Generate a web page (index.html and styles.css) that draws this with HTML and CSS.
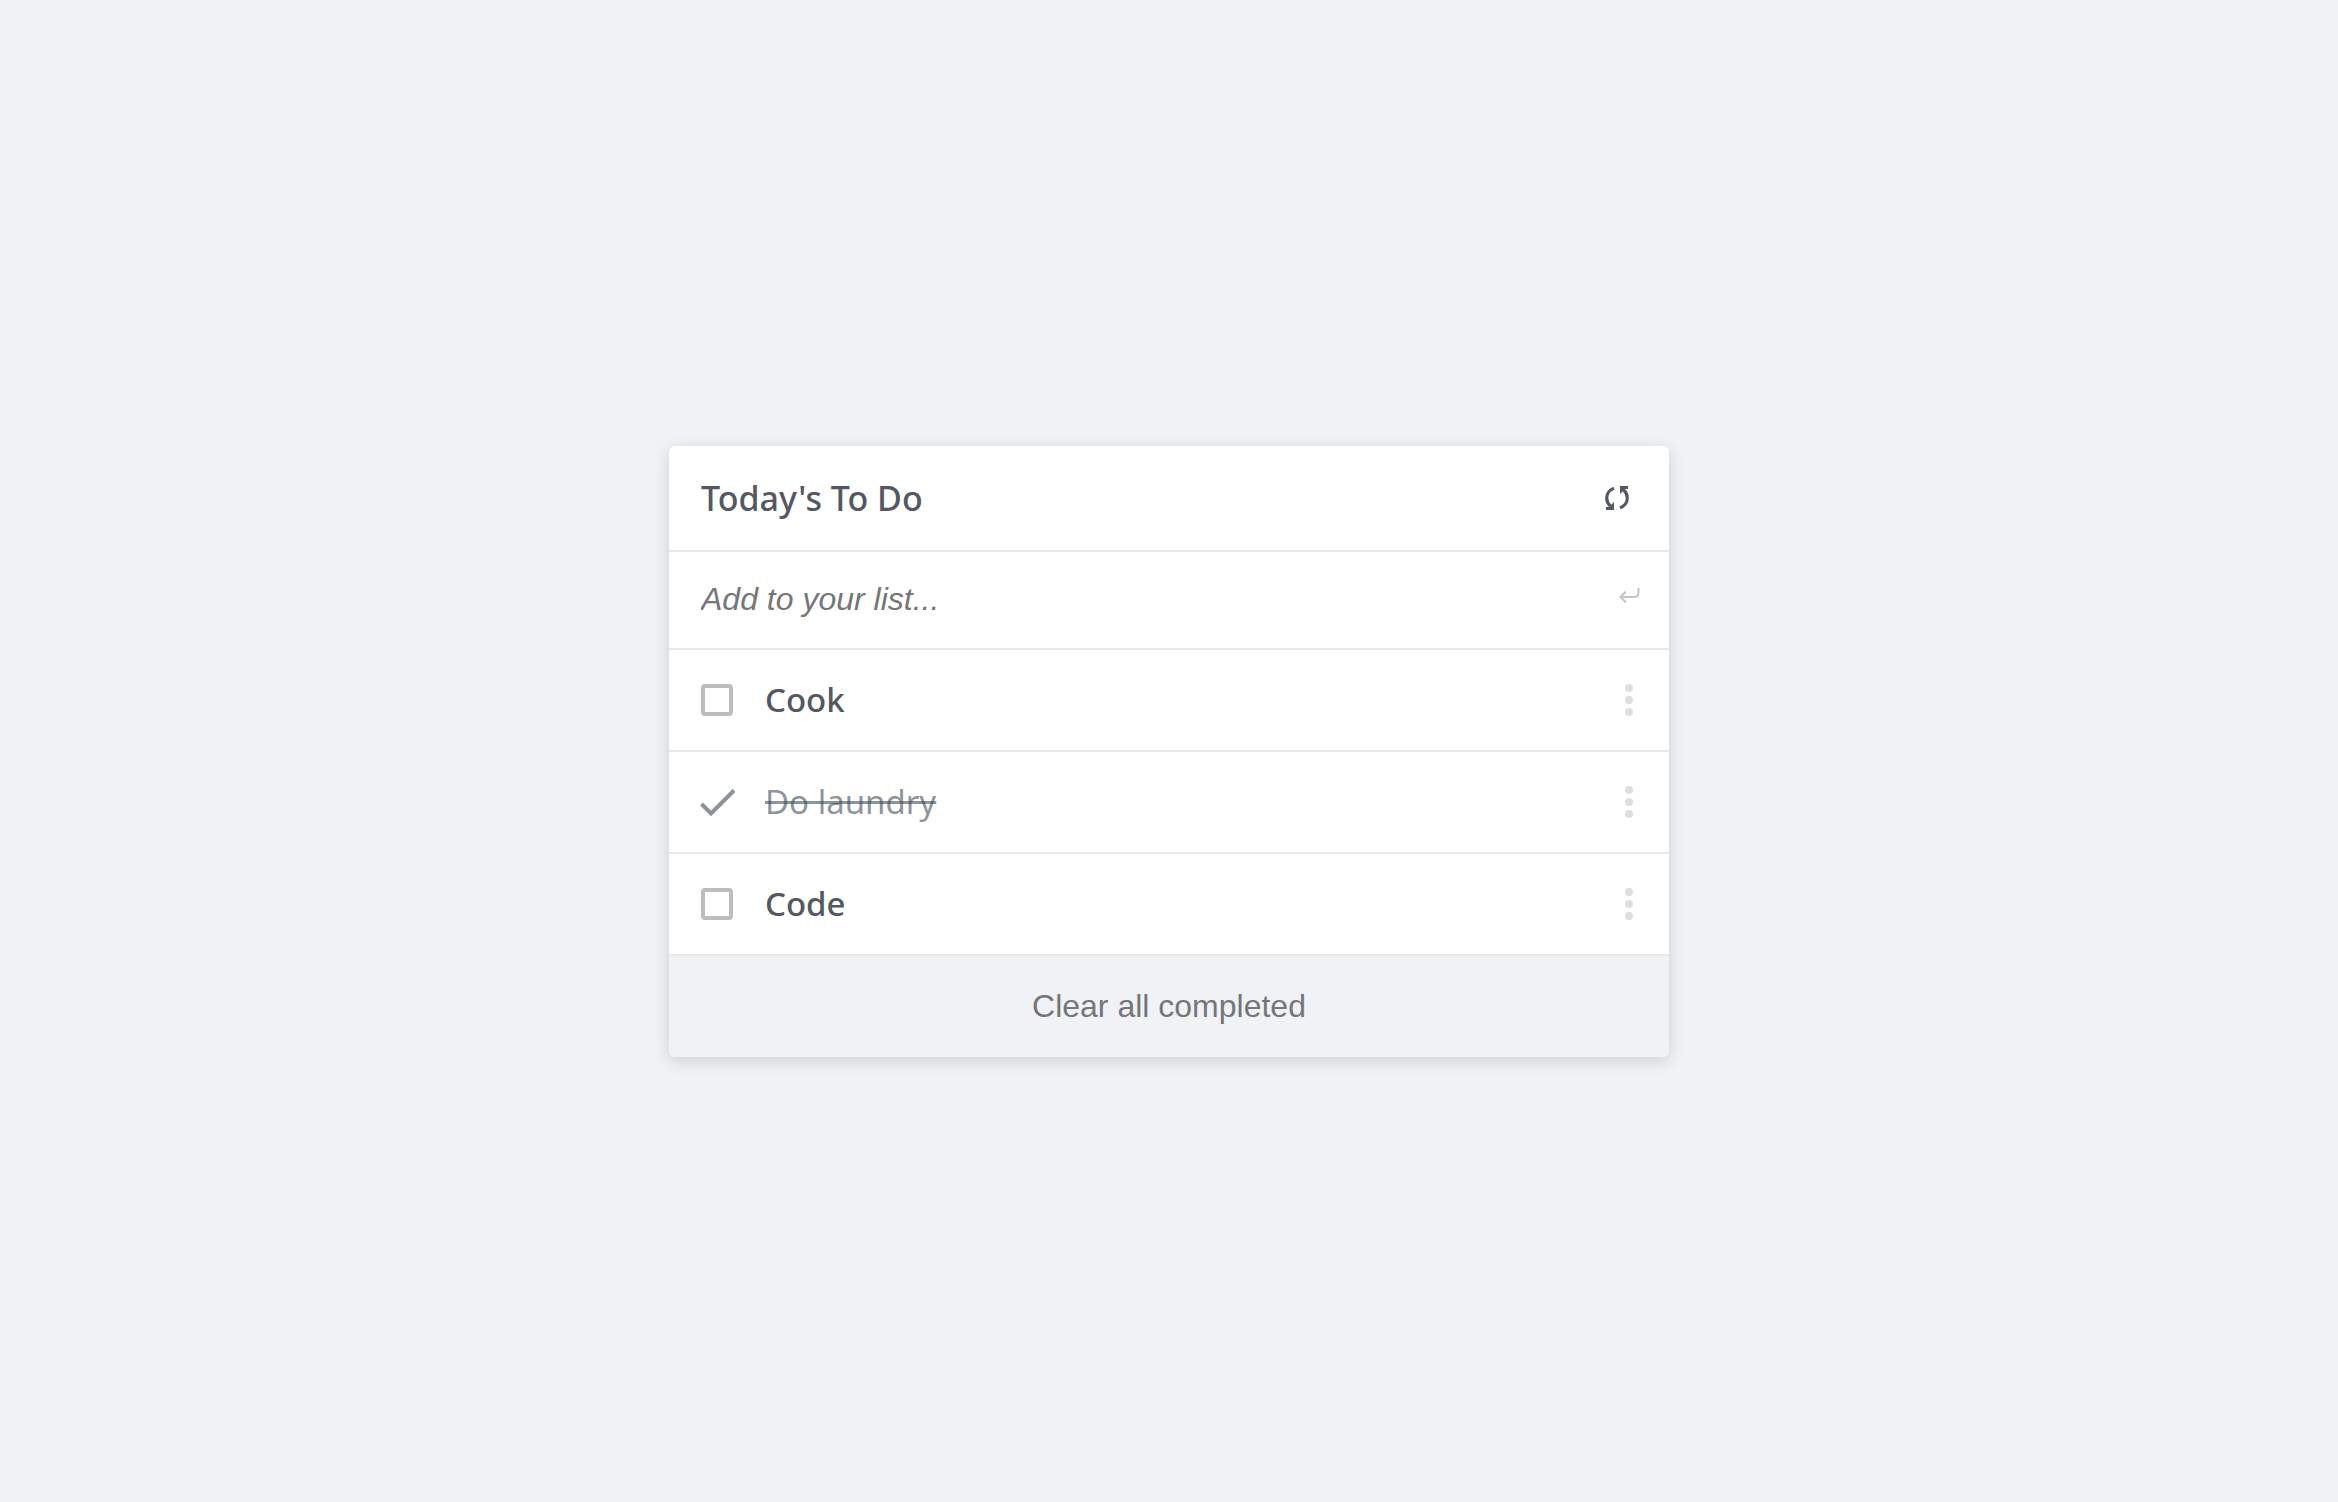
FILE: index.html
```html
<!DOCTYPE html>
<html lang="en">
<head>
  <meta charset="utf-8">
  <meta name="viewport" content="width=device-width, initial-scale=1">
  <title>To Do</title>
  <link rel="stylesheet" href="styles.css">
</head>
<body>
  <main class="card">
    <header class="card-header">
      <h1 class="title">Today's To Do</h1>
      <button class="icon-button refresh" type="button" aria-label="Refresh">
        <svg width="24" height="24" viewBox="0 0 24 24" aria-hidden="true">
          <path d="M9 2.2C4.800 3.600 1.700 7.400 1.700 12C1.700 15.200 3.100 18 5.300 20M15 21.800C19.200 20.400 22.300 16.600 22.300 12C22.300 8.800 20.900 6 18.700 4" fill="none" stroke="currentColor" stroke-width="3.200"/>
          <path d="M9 16v8H1v-3h3l2-2zM15 8V0h8v3h-3l-2 2z" fill="currentColor"/>
        </svg>
      </button>
    </header>

    <form class="add-row">
      <input class="add-input" type="text" placeholder="Add to your list..." aria-label="Add to your list">
      <button class="icon-button enter" type="submit" aria-label="Add">
        <svg width="22" height="18" viewBox="0 0 22 18" aria-hidden="true">
          <path d="M19.500 1v4.500Q19.500 10 15 10H1.500M7 4.500L1.500 10L7 15.500" fill="none" stroke="currentColor" stroke-width="2"/>
        </svg>
      </button>
    </form>

    <ul class="list">
      <li class="item">
        <label class="item-label">
          <input class="check" type="checkbox">
          <span class="item-text">Cook</span>
        </label>
        <button class="icon-button more" type="button" aria-label="Options for Cook">
          <span class="dot"></span><span class="dot"></span><span class="dot"></span>
        </button>
      </li>
      <li class="item">
        <label class="item-label">
          <input class="check" type="checkbox" checked>
          <svg class="tick" width="36" height="32" viewBox="1 0 36 32" aria-hidden="true">
            <path d="M1.500 18L11 27.500L34 4.500" fill="none" stroke="currentColor" stroke-width="4"/>
          </svg>
          <span class="item-text">Do laundry</span>
        </label>
        <button class="icon-button more" type="button" aria-label="Options for Do laundry">
          <span class="dot"></span><span class="dot"></span><span class="dot"></span>
        </button>
      </li>
      <li class="item">
        <label class="item-label">
          <input class="check" type="checkbox">
          <span class="item-text">Code</span>
        </label>
        <button class="icon-button more" type="button" aria-label="Options for Code">
          <span class="dot"></span><span class="dot"></span><span class="dot"></span>
        </button>
      </li>
    </ul>

    <button class="clear" type="button">Clear all completed</button>
  </main>
</body>
</html>
```
FILE: styles.css
```css
* {
  box-sizing: border-box;
}

body {
  margin: 0;
  min-height: 100vh;
  display: flex;
  align-items: center;
  justify-content: center;
  background: #f0f2f6;
  color: #545862;
  font-family: "Noto Sans", sans-serif;
  font-size: 33px;
  line-height: 44px;
}

.card {
  width: 100%;
  max-width: 1000px;
  overflow: hidden;
  border-radius: 6px;
  background: #fff;
  box-shadow: 0 4px 16px rgba(0, 0, 0, 0.15);
}

.card-header,
.add-row,
.item {
  display: flex;
  align-items: center;
  justify-content: space-between;
  padding: 0 32px;
  border-bottom: 2px solid #e8e8ea;
}

.card-header {
  min-height: 106px;
  padding-right: 40px;
}

.title {
  margin: 0;
  font-size: 34px;
  font-weight: 500;
}

.icon-button {
  display: flex;
  padding: 0;
  border: 0;
  background: none;
  color: inherit;
  cursor: pointer;
}

.add-row {
  min-height: 98px;
  padding-right: 28px;
}

.add-input {
  flex: 1;
  min-width: 0;
  padding: 0;
  border: 0;
  outline: 0;
  background: none;
  color: #545862;
  font: italic 32px "Liberation Sans", Arial, sans-serif;
}

.add-input::placeholder {
  color: #757679;
  opacity: 1;
}

.enter {
  color: #c3c4c8;
  padding-bottom: 8px;
}

.list {
  margin: 0;
  padding: 0;
  list-style: none;
}

.item {
  min-height: 102px;
  padding-right: 36px;
}

.item-label {
  position: relative;
  display: flex;
  align-items: center;
  gap: 32px;
}

.check {
  appearance: none;
  width: 32px;
  height: 32px;
  margin: 0;
  border: 4px solid #bcbdc1;
  border-radius: 4px;
}

.check:checked {
  border-color: transparent;
}

.tick {
  position: absolute;
  left: 0;
  overflow: visible;
  color: #8b929a;
}

.item-text {
  font-weight: 500;
}

.check:checked ~ .item-text {
  color: rgba(64, 76, 90, 0.6);
  font-weight: 400;
  text-decoration: line-through;
  text-decoration-thickness: 3px;
}

.more {
  flex-direction: column;
  gap: 4px;
}

.dot {
  width: 8px;
  height: 8px;
  border-radius: 50%;
  background: #dddee1;
}

.clear {
  display: block;
  width: 100%;
  min-height: 101px;
  border: 0;
  background: #f0f2f6;
  color: #757679;
  font: 32px "Liberation Sans", Arial, sans-serif;
  cursor: pointer;
}
```
